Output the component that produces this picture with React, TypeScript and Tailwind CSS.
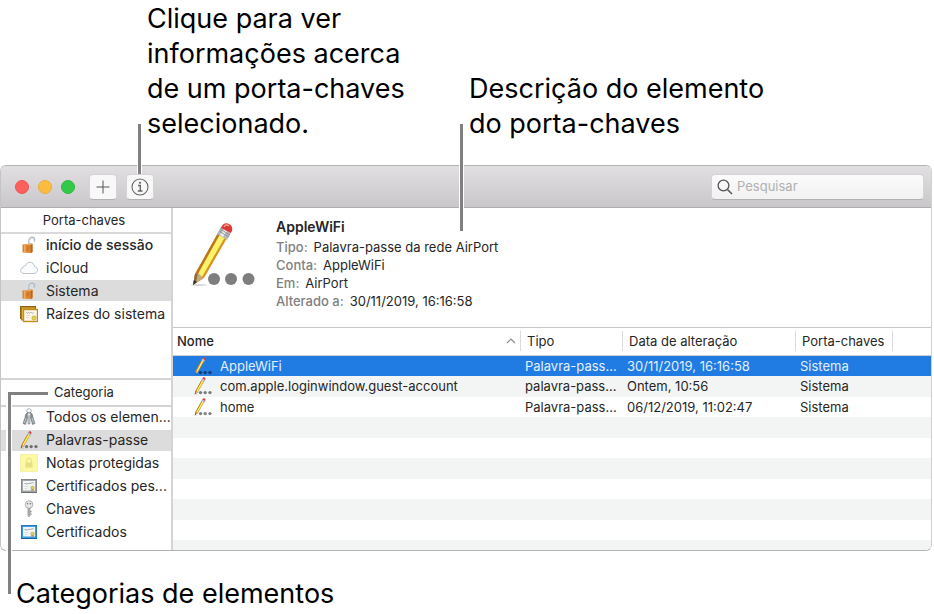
import { useState, type ReactNode } from "react";
import clsx from "clsx";

type Item = { id: string; label: string; icon: ReactNode; strong?: boolean };

type Entry = {
  name: string;
  kind: string;
  modified: string;
  keychain: string;
};

function PasswordIcon({ className }: { className?: string }) {
  return (
    <svg viewBox="0 0 66 66" className={className} aria-hidden="true">
      <ellipse cx="9" cy="63" rx="8" ry="1" fill="#000" opacity="0.15" />
      <path d="M3 63 5 52 28 11 37 16 14 56Z" fill="#d89420" />
      <path d="M8 52 30 12 35 15 12 55Z" fill="#fdf36a" />
      <path d="M5 52 7 53 30 12 28 11Z" fill="#b9761b" />
      <path d="M3 63 5 52 8 51 11 54 14 56Z" fill="#c8a878" />
      <path d="M3 63 5 52 8 51 6 60Z" fill="#8c6a3c" />
      <path d="M3 63 4 58 7 60Z" fill="#333" />
      <path d="M27 12 31 5 41 11 37 18Z" fill="#b5b7ba" />
      <path d="M30 13 34 7 37 9 33 15Z" fill="#ececee" />
      <path d="M29 9 39 15M30 7 40 13" stroke="#85878a" strokeWidth="0.8" />
      <path d="M31 6C32 2 36 0 39 2 43 4 43 8 41 11Z" fill="#d93a35" />
      <path d="M34 5C35 3 37 2 39 4" stroke="#f79a90" strokeWidth="1.5" fill="none" />
      <g fill="#000" opacity="0.5">
        <circle cx="24" cy="57" r="6" />
        <circle cx="41" cy="57" r="6" />
        <circle cx="58.500" cy="57" r="6" />
      </g>
    </svg>
  );
}

function PadlockIcon() {
  return (
    <svg viewBox="0 0 18 18" className="size-4.5" aria-hidden="true">
      <path d="M9 8V4a3 3 0 0 1 5.400-1.500V5.500" fill="none" stroke="#a9b9c5" strokeWidth="1.500" />
      <path d="M9.500 7V4.500a2.500 2.500 0 0 1 4-1.500" fill="none" stroke="#e4ecf1" strokeWidth="0.600" />
      <path d="M2.500 8.500 11 7.500 12.500 8V16L11 17 2.500 16.500Z" fill="#d98432" />
      <path d="M10.500 7.600 12.500 8V16L11 17Z" fill="#b9641d" />
      <path d="M4 8.600H5.500V16.500H4Z" fill="#f0ac62" />
      <path d="M2.500 8.500 11 7.500 12.500 8 10.500 8.700Z" fill="#f6c080" />
      <path d="M7.500 11H8.300V14H7.500Z" fill="#b4682a" />
    </svg>
  );
}

function CloudIcon() {
  return (
    <svg viewBox="0 0 18 18" className="size-4.5" aria-hidden="true">
      <path
        d="M4.200 14.500C2 14.500.6 13.200.6 11.500.6 10 1.600 8.900 3 8.700 3 7.200 4.300 6.400 5.500 6.700 6.300 4.500 8 3.300 10 3.300c2.500 0 4.400 1.800 4.500 4.300 1.800.3 3 1.600 3 3.400 0 2-1.500 3.500-3.500 3.500Z"
        fill="#fafcfd"
        stroke="#b4babe"
        strokeWidth="0.900"
      />
    </svg>
  );
}

function RootsIcon() {
  return (
    <svg viewBox="0 0 18 18" className="size-4.5" aria-hidden="true">
      <rect x="0.500" y="1.500" width="15" height="12" fill="#d9a22c" stroke="#8d6313" />
      <rect x="1.500" y="3" width="14" height="12" fill="#e8bb48" stroke="#96690f" strokeWidth="0.700" />
      <rect x="3.500" y="4.500" width="14" height="12" fill="#fbf7ea" stroke="#c28d1d" strokeWidth="1.400" />
      <path d="M6 8c1-1.500 1 1 2 0s1 .5 2 0 1-1 2 0 1-.5 2-.5" fill="none" stroke="#888" strokeWidth="0.600" />
      <path d="M6 10.500h4M6 12.500h3" stroke="#eccac6" strokeWidth="0.700" />
      <circle cx="14" cy="13" r="2.200" fill="#e4d23c" stroke="#b8a02a" strokeWidth="0.500" />
    </svg>
  );
}

function KeysIcon() {
  return (
    <svg viewBox="0 0 18 18" className="size-4.5" aria-hidden="true">
      <circle cx="9" cy="3" r="2.300" fill="none" stroke="#a5abaf" strokeWidth="0.900" />
      <path d="M5.500 6.500 7.500 4.500 9 6 7.500 9.500 5.500 16.500 3 15.500 5 9.500Z" fill="#8b9397" stroke="#5d6468" strokeWidth="0.500" />
      <path d="M12.500 6.500 10.500 4.500 9 6 10.500 9.500 12.500 16.500 15 15.500 13 9.500Z" fill="#8b9397" stroke="#5d6468" strokeWidth="0.500" />
      <path d="M7 5.500 9 4 11 5.500V9L10 10V16H8V10L7 9Z" fill="#b4bbbe" stroke="#62696d" strokeWidth="0.500" />
      <path d="M9 9.500V15.500M6 10 4.500 15M12 10l1.500 5" stroke="#e3e7e9" strokeWidth="0.600" />
      <circle cx="9" cy="6.500" r="0.900" fill="#eef1f2" />
    </svg>
  );
}

function NoteIcon() {
  return (
    <svg viewBox="0 0 18 18" className="size-4.5" aria-hidden="true">
      <rect x="0.500" y="0.500" width="17" height="17" fill="#fdf8a2" stroke="#f1ea93" strokeWidth="0.600" />
      <path d="M6.700 9V6.500a2.300 2.300 0 0 1 4.600 0V9" fill="none" stroke="#e6dc8a" strokeWidth="1" />
      <rect x="5.500" y="8.500" width="7" height="5" rx="0.500" fill="#e8de86" />
    </svg>
  );
}

function CertificateIcon({ frame, shade }: { frame: string; shade: string }) {
  return (
    <svg viewBox="0 0 18 18" className="size-4.5" aria-hidden="true">
      <rect x="1" y="2" width="16" height="14" fill={shade} />
      <rect x="1.500" y="2.500" width="15" height="12.500" fill={frame} />
      <rect x="3" y="4" width="12" height="9.500" fill="#f3f6f7" />
      <path d="M4.500 7c1-2 1 1 2 0s1 .5 2-.5 1 .5 2 0 1-.7 3-.7" fill="none" stroke="#666" strokeWidth="0.600" />
      <path d="M4.500 9.500h4M4.500 11.500h3" stroke="#cdd3d5" strokeWidth="0.700" />
      <path d="M11.500 11v3l1-.7 1 .7v-3" fill="#8f7c2c" />
      <circle cx="12.500" cy="10.800" r="1.800" fill="#dfcf58" stroke="#9f9242" strokeWidth="0.400" />
    </svg>
  );
}

function KeyIcon() {
  return (
    <svg viewBox="0 0 18 18" className="size-4.5" aria-hidden="true">
      <path d="M7.900 7h2.200v9L9 17l-1.100-1Z" fill="#c9cbcc" stroke="#858889" strokeWidth="0.600" />
      <path d="M10.100 11h1.500v1.300h-1.500M10.100 13.500h1.500v1.300h-1.500" fill="#8d9091" />
      <circle cx="9" cy="4.500" r="3.800" fill="#e6e8e9" stroke="#95989a" strokeWidth="0.700" />
      <circle cx="7.600" cy="3.800" r="0.800" fill="#6e7172" />
      <circle cx="10.400" cy="3.800" r="0.800" fill="#6e7172" />
      <path d="M9 8.500V15" stroke="#777" strokeWidth="0.600" />
    </svg>
  );
}

const keychains: Item[] = [
  { id: "login", label: "início de sessão", icon: <PadlockIcon />, strong: true },
  { id: "icloud", label: "iCloud", icon: <CloudIcon /> },
  { id: "system", label: "Sistema", icon: <PadlockIcon /> },
  { id: "roots", label: "Raízes do sistema", icon: <RootsIcon /> },
];

const categories: Item[] = [
  { id: "all", label: "Todos os elemen...", icon: <KeysIcon /> },
  { id: "passwords", label: "Palavras-passe", icon: <PasswordIcon className="size-4.5" /> },
  { id: "notes", label: "Notas protegidas", icon: <NoteIcon /> },
  { id: "mine", label: "Certificados pes...", icon: <CertificateIcon frame="#a3a5a6" shade="#6c6e6f" /> },
  { id: "keys", label: "Chaves", icon: <KeyIcon /> },
  { id: "certs", label: "Certificados", icon: <CertificateIcon frame="#3a9be0" shade="#145f9f" /> },
];

const entries: Entry[] = [
  { name: "AppleWiFi", kind: "Palavra-pass...", modified: "30/11/2019, 16:16:58", keychain: "Sistema" },
  { name: "com.apple.loginwindow.guest-account", kind: "palavra-pass...", modified: "Ontem, 10:56", keychain: "Sistema" },
  { name: "home", kind: "Palavra-pass...", modified: "06/12/2019, 11:02:47", keychain: "Sistema" },
];

const details = [
  { label: "Tipo:", value: "Palavra-passe da rede AirPort" },
  { label: "Conta:", value: "AppleWiFi" },
  { label: "Em:", value: "AirPort" },
  { label: "Alterado a:", value: "30/11/2019, 16:16:58" },
];

function SidebarList({ items, initial }: { items: Item[]; initial: string }) {
  const [selected, setSelected] = useState(initial);

  return (
    <ul className="flex flex-col gap-0.5">
      {items.map((item) => (
        <li key={item.id}>
          <button
            onClick={() => setSelected(item.id)}
            className={clsx(
              "flex h-[21px] w-full items-center gap-2 pl-[19px] text-left text-sm whitespace-nowrap",
              item.strong && "font-medium",
              selected === item.id && "bg-[#dcdcdc]"
            )}
          >
            <span className="shrink-0">{item.icon}</span>
            <span>{item.label}</span>
          </button>
        </li>
      ))}
    </ul>
  );
}

function Toolbar() {
  return (
    <header className="flex h-[42px] items-center border-b border-[#aeacae] bg-linear-to-b from-[#e2dfe2] to-[#c9c7c9] pr-[7px] pl-3.5">
      <div className="flex gap-[9px]">
        <button aria-label="Fechar" className="size-3.5 rounded-full border border-[#ee5450] bg-[#fc605c]" />
        <button aria-label="Minimizar" className="size-3.5 rounded-full border border-[#e9ae3a] bg-[#fdbc40]" />
        <button aria-label="Ampliar" className="size-3.5 rounded-full border border-[#2bba42] bg-[#34c84a]" />
      </div>
      <div className="ml-3.5 flex gap-[9px]">
        <button
          aria-label="Adicionar"
          className="flex h-[26px] w-7 items-center justify-center rounded border border-[#d5d3d5] border-b-[#b3b1b3] bg-[#f8f8f8]"
        >
          <svg viewBox="0 0 14 14" className="size-3.5" stroke="#555" fill="none">
            <path d="M7 .5v13M.5 7h13" />
          </svg>
        </button>
        <button
          aria-label="Informações"
          className="flex h-[26px] w-7 items-center justify-center rounded border border-[#d5d3d5] border-b-[#b3b1b3] bg-[#f8f8f8]"
        >
          <svg viewBox="0 0 18 18" className="size-4.5 shrink-0" stroke="#666" fill="none">
            <circle cx="9" cy="9" r="8" strokeWidth="1.100" />
            <path d="M7 7.500h2.300v5.500M6.800 13h4.700" strokeWidth="1.400" />
            <circle cx="9" cy="4.800" r="1.100" fill="#666" stroke="none" />
          </svg>
        </button>
      </div>
      <label className="ml-auto flex h-[26px] w-[213px] items-center gap-1 rounded border border-[#d5d3d5] border-b-[#b3b1b3] bg-linear-to-b from-[#fbfbfb] to-[#f1f1f1] px-[5px]">
        <svg viewBox="0 0 16 16" className="size-4 shrink-0" stroke="#555" strokeWidth="1.300" fill="none">
          <circle cx="6.500" cy="6.500" r="5.400" />
          <path d="M10.500 10.500 15 15" strokeWidth="1.500" />
        </svg>
        <input
          type="search"
          aria-label="Pesquisar"
          placeholder="Pesquisar"
          className="min-w-0 flex-1 bg-transparent text-[13px] outline-none placeholder:text-[#b0b0b0]"
        />
      </label>
    </header>
  );
}

function EntryTable() {
  const [selected, setSelected] = useState(0);

  return (
    <table className="w-full table-fixed text-left">
      <colgroup>
        <col />
        <col className="w-[102px]" />
        <col className="w-[173px]" />
        <col className="w-[97px]" />
        <col className="w-[38px]" />
      </colgroup>
      <thead>
        <tr className="h-[27px] border-b border-[#d0d0d0] text-[13px] [&>th]:p-0 [&>th]:font-normal">
          <th>
            <div className="flex h-5 items-center justify-between border-r border-[#dadada] pr-1 pl-1">
              <span className="font-medium">Nome</span>
              <svg viewBox="0 0 10 6" className="h-1.5 w-2.5" fill="none" stroke="#8a8a8a" strokeWidth="1.200">
                <path d="M1 5 5 1l4 4" />
              </svg>
            </div>
          </th>
          <th><div className="h-5 border-r border-[#dadada] pl-1.5 leading-5">Tipo</div></th>
          <th><div className="h-5 border-r border-[#dadada] pl-1.5 leading-5">Data de alteração</div></th>
          <th><div className="h-5 border-r border-[#dadada] pl-1.5 leading-5">Porta-chaves</div></th>
          <th />
        </tr>
      </thead>
      <tbody className="text-[13px] leading-5 whitespace-nowrap">
        {entries.map((entry, i) => (
          <tr
            key={entry.name}
            onClick={() => setSelected(i)}
            className={clsx(
              "h-5 even:h-[21px] even:bg-[#f3f5f5] [&>td]:py-0 [&>td]:pl-1",
              selected === i && "bg-[#207ce2] text-[#e3effc]"
            )}
          >
            <td>
              <div className="flex items-center gap-2 pl-[17px]">
                <PasswordIcon className="size-4.5 shrink-0" />
                <span>{entry.name}</span>
              </div>
            </td>
            <td>{entry.kind}</td>
            <td>{entry.modified}</td>
            <td>{entry.keychain}</td>
            <td />
          </tr>
        ))}
        {/* empty striped rows down to the window edge */}
        <tr className="h-[21px] bg-[#f3f5f5]">
          <td colSpan={5} className="p-0" />
        </tr>
        {[0, 1, 2, 3, 4].map((n) => (
          <tr key={n} className="h-5 even:h-[21px] even:bg-[#f3f5f5]">
            <td colSpan={5} className="p-0" />
          </tr>
        ))}
        <tr className="h-2.5 bg-[#f3f5f5]">
          <td colSpan={5} className="p-0" />
        </tr>
      </tbody>
    </table>
  );
}

export default function App() {
  return (
    <main className="bg-white font-['Inter','Liberation_Sans',sans-serif] text-[#262626]">
      <div className="flex h-[165px] items-end gap-14 pb-6 pl-[147px] text-[27px] leading-[35px] text-black">
        <p className="relative w-[266px]">
          Clique para ver informações acerca de um porta-chaves selecionado.
          <span className="absolute top-[123px] -left-2.5 z-10 h-[50px] w-[5px] border-x border-white bg-[#808080]" />
        </p>
        <p className="relative w-80">
          Descrição do elemento do porta-chaves
          <span className="absolute top-[53px] -left-2.5 z-10 h-[107px] w-[5px] border-x border-white bg-[#808080]" />
        </p>
      </div>

      <section className="mr-0.5 overflow-hidden rounded-md border border-[#b4b2b4] border-r-[#d0d0d0] border-l-[#c4c4c4]">
        <Toolbar />
        <div className="flex">
          <aside className="flex w-[172px] shrink-0 flex-col justify-between border-r-2 border-[#d4d4d4]">
            <div>
              <h2 className="h-[26px] border-b-2 border-[#d9d9d9] pr-1 text-center text-[13px] leading-6">Porta-chaves</h2>
              <SidebarList items={keychains} initial="system" />
            </div>
            <div className="pb-[7px]">
              <h2 className="h-[29px] border-y-2 border-[#d4d4d4] pr-1 text-center text-[13px] leading-[25px]">Categoria</h2>
              <SidebarList items={categories} initial="passwords" />
            </div>
          </aside>

          <div className="min-w-0 flex-1">
            <div className="flex h-[120px] gap-5 border-b border-[#c8c8c8] pt-2 pl-[17px]">
              <PasswordIcon className="mt-1.5 size-[66px] shrink-0" />
              <div>
                <h1 className="text-sm leading-[22px] font-semibold">AppleWiFi</h1>
                <dl className="text-[13px] leading-[18px]">
                  {details.map((detail) => (
                    <div key={detail.label} className="flex gap-1.5">
                      <dt className="font-medium text-[#808080]">{detail.label}</dt>
                      <dd>{detail.value}</dd>
                    </div>
                  ))}
                </dl>
              </div>
            </div>
            <EntryTable />
          </div>
        </div>
      </section>

      <div className="relative pt-[25px] pl-4 text-[27px] leading-[35px] text-black">
        <p>Categorias de elementos</p>
        <span className="absolute bottom-[17px] left-2 h-[202px] w-10 border-t-[3px] border-l-[3px] border-[#808080] shadow-[-2px_0_0_#fff,inset_1px_0_0_#fff]" />
      </div>
    </main>
  );
}
